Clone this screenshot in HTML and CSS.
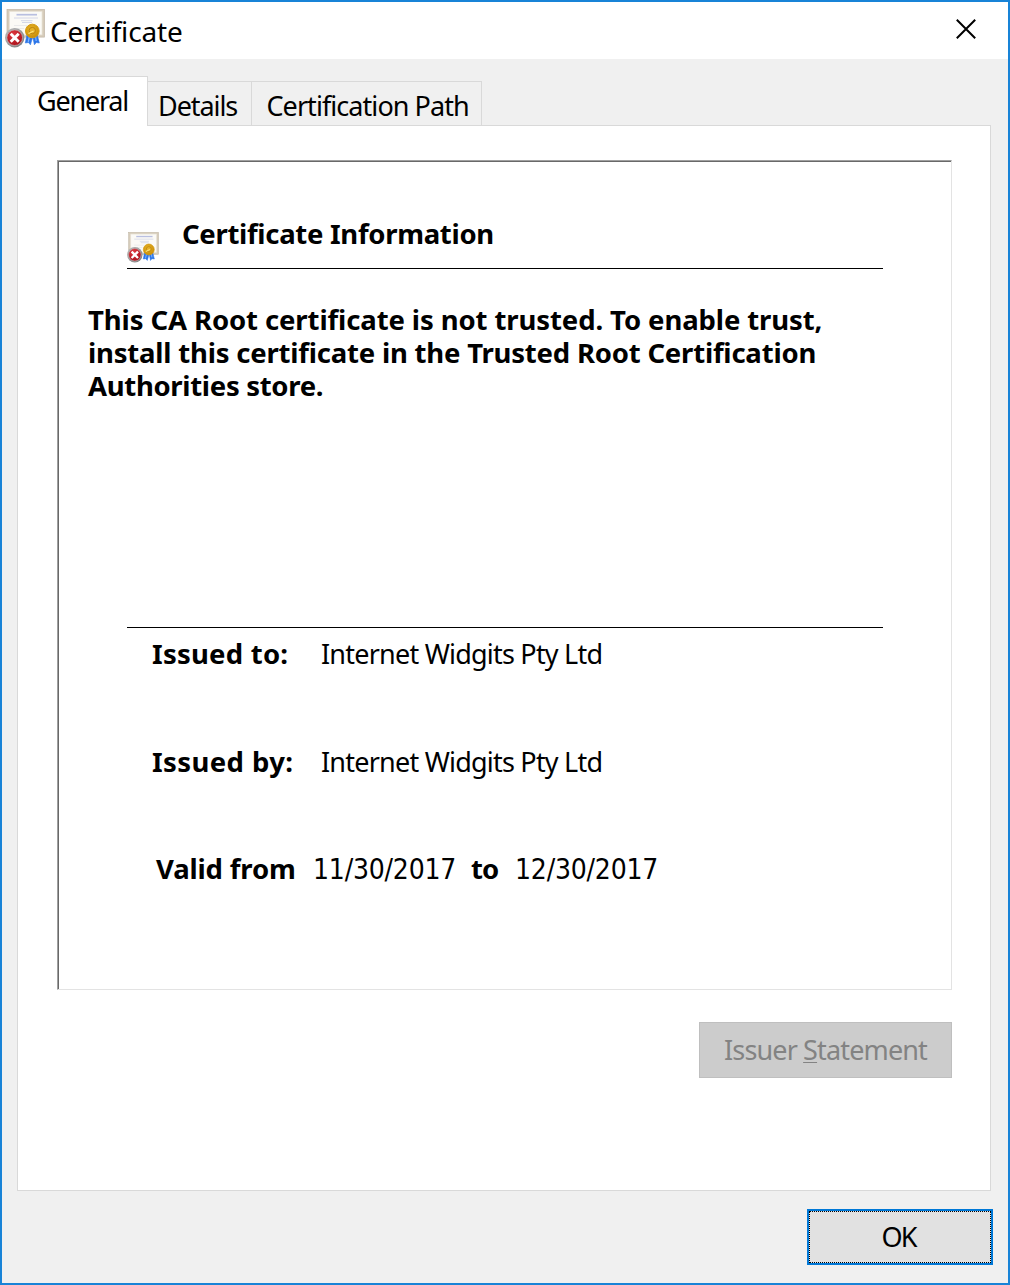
FILE: index.html
```
<!DOCTYPE html>
<html lang="en">
<head>
<meta charset="utf-8">
<title>Certificate</title>
<link rel="stylesheet" href="styles.css">
</head>
<body>
<svg class="defs" aria-hidden="true">
  <defs>
    <radialGradient id="red" cx="40%" cy="30%" r="75%"><stop offset="0" stop-color="#e03a40"/><stop offset="1" stop-color="#a80e18"/></radialGradient>
    <linearGradient id="rim" x1="0" y1="0" x2="1" y2="1"><stop offset="0" stop-color="#bdbdbd"/><stop offset="1" stop-color="#777"/></linearGradient>
    <radialGradient id="gold" cx="45%" cy="40%" r="60%"><stop offset="0" stop-color="#f0bd2c"/><stop offset="1" stop-color="#c78b06"/></radialGradient>
    <symbol id="cert" viewBox="0 0 40 39">
      <rect x="2" y=".5" width="37.5" height="27.6" fill="#d6ccba" stroke="#c0b6a4" stroke-width=".7"/>
      <rect x="4.6" y="2.6" width="32.4" height="23.2" fill="#fbfaf6" stroke="#ebe5da" stroke-width=".8"/>
      <path d="M11.5 5.7H32" stroke="#b9bfe0" stroke-width="1.7"/>
      <path d="M9 9H33M16 11.7H27.5M17 13.5H27" stroke="#cfd3e6" stroke-width=".9"/>
      <path d="M9 16.5H22M8 19.5H19" stroke="#e6e6e8" stroke-width=".8"/>
      <path d="M22 25.5L20.3 34L23.5 33.5L25.4 35.8L28 27ZM27.6 27L29.4 35.8L31.3 33.5L34.3 34L32.2 25.5Z" fill="#2c76e8" stroke="#2c76e8" stroke-width=".6"/>
      <path d="M24.3 28L23.2 33M30.7 28L31.2 32" stroke="#82b6ff" stroke-width="1.2"/>
      <circle cx="27.3" cy="22" r="6.8" fill="url(#gold)" stroke="#d69b12" stroke-width="1"/>
      <circle cx="27.3" cy="21.6" r="3.2" fill="#e6b028" stroke="#b98410" stroke-width="1"/>
      <path d="M23.5 24.5L28.6 22" stroke="#ffe477" stroke-width="1.3"/>
      <circle cx="9.7" cy="28.7" r="9.7" fill="url(#rim)"/>
      <circle cx="9.7" cy="28.7" r="7.8" fill="url(#red)" stroke="#d0c4c4" stroke-width=".6"/>
      <path d="M5.7 24.7L13.7 32.7M13.7 24.7L5.7 32.7" stroke="#fff" stroke-width="2.9"/>
    </symbol>
  </defs>
</svg>
<div class="window">
  <header class="titlebar">
    <svg class="title-icon"><use href="#cert"/></svg>
    <h1 class="title">Certificate</h1>
    <svg class="close" viewBox="0 0 20 20"><path d="M.8.8L19.2 19.2M19.2.8L.8 19.2"/></svg>
  </header>
  <nav class="tabs">
    <span class="tab active">General</span>
    <span class="tab details">Details</span>
    <span class="tab path">Certification Path</span>
  </nav>
  <main class="pane">
    <section class="frame">
      <div class="heading">
        <svg class="cert-icon"><use href="#cert"/></svg>
        <h2 class="heading-text">Certificate Information</h2>
      </div>
      <p class="message"><span class="line first">This CA Root certificate is not trusted. To enable trust,</span><span class="line second">install this certificate in the Trusted Root Certification</span><span class="line third">Authorities store.</span></p>
      <div class="info">
        <div class="row"><b class="label to">Issued to:</b><span class="value">Internet Widgits Pty Ltd</span></div>
        <div class="row"><b class="label by">Issued by:</b><span class="value">Internet Widgits Pty Ltd</span></div>
        <div class="row validity"><b class="from">Valid from</b><span class="date">11/30/2017</span><b class="until">to</b><span class="date">12/30/2017</span></div>
      </div>
    </section>
    <button class="issuer" disabled><span>Issuer <u>S</u>tatement</span></button>
  </main>
  <footer class="footer"><button class="ok"><span class="ok-face">OK</span></button></footer>
</div>
</body>
</html>
```
FILE: styles.css
```
* { box-sizing: border-box; }
body {
  margin: 0;
  font: 27px/34px "Noto Sans", "Open Sans", sans-serif;
  color: #000;
}
h1, h2, p { margin: 0; font-weight: normal; }
button { font: inherit; padding: 0; border-radius: 0; }
.defs { position: absolute; width: 0; height: 0; }

.window {
  width: 1010px;
  height: 1285px;
  border: 2px solid #1883d7;
  background: #f0f0f0;
  display: flex;
  flex-direction: column;
}

.titlebar {
  height: 57px;
  background: #fff;
  display: flex;
  align-items: flex-start;
  padding: 7px 32px 0 3px;
  flex: none;
}
.title-icon { width: 40px; height: 39px; }
.title { font-size: 28px; letter-spacing: -0.15px; margin: 5px auto 0 5px; }
.close { width: 20px; height: 20px; margin-top: 10px; }
.close path { stroke: #000; stroke-width: 2; fill: none; }

.tabs {
  display: flex;
  align-items: flex-end;
  height: 67px;
  margin: 0 15px -1px;
  flex: none;
  position: relative;
}
.tab {
  height: 45px;
  border: 1px solid #d9d9d9;
  border-left: 0;
  white-space: nowrap;
}
.active {
  width: 131px;
  height: 50px;
  background: #fff;
  border-left: 1px solid #d9d9d9;
  border-bottom: 0;
  padding: 7px 0 0 19px;
  letter-spacing: -1.23px;
}
.details { width: 104px; padding: 7px 0 0 10px; letter-spacing: -1.07px; }
.path { width: 230px; padding: 7px 0 0 14.5px; letter-spacing: -0.94px; }

.pane {
  height: 1066px;
  margin: 0 17px 0 15px;
  border: 1px solid #d9d9d9;
  background: #fff;
  padding: 34px 38px 0 39px;
  display: flex;
  flex-direction: column;
  align-items: flex-end;
  flex: none;
}
.frame {
  align-self: stretch;
  height: 830px;
  border: 1px solid;
  border-color: #a0a0a0 #e3e3e3 #e3e3e3 #a0a0a0;
  box-shadow: inset 1px 1px #696969;
}
.heading {
  height: 108px;
  margin: 0 68px 0 69px;
  border-bottom: 1px solid #000;
  display: flex;
  align-items: flex-start;
}
.cert-icon { width: 32px; height: 31px; margin-top: 71px; }
.heading-text {
  margin: 56px 0 0 23px;
  font-weight: bold;
  font-size: 27.5px;
  letter-spacing: -0.3px;
}
.message {
  height: 358px;
  padding: 34px 0 0 30px;
  font-weight: bold;
  font-size: 27.5px;
  line-height: 33px;
}
.line { display: block; white-space: nowrap; }
.first { letter-spacing: -0.1px; }
.second { letter-spacing: -0.2px; }
.third { letter-spacing: -0.31px; }

.info {
  margin: 0 68px 0 69px;
  border-top: 1px solid #000;
  padding: 9px 0 0 25px;
  display: flex;
  flex-direction: column;
  gap: 74px;
}
.row { display: flex; height: 34px; white-space: nowrap; }
.row b { font-size: 27.5px; }
.label { width: 169px; }
.to { letter-spacing: .23px; }
.by { letter-spacing: .4px; }
.value { letter-spacing: -0.78px; }
.validity { padding-left: 4px; margin-top: -1px; }
.from { width: 157px; letter-spacing: -0.15px; }
.until { width: 44px; letter-spacing: -1px; }
.date {
  width: 158px;
  padding-top: 1px;
  font-family: "DejaVu Sans Condensed", "DejaVu Sans", sans-serif;
  font-stretch: condensed;
  font-size: 28px;
  letter-spacing: -0.2px;
}

.issuer {
  width: 253px;
  height: 56px;
  margin-top: 32px;
  border: 1px solid #bfbfbf;
  background: #ccc;
  color: #838383;
  letter-spacing: -0.86px;
}
.issuer u { text-decoration-thickness: 1px; text-underline-offset: 2px; }

.footer { display: flex; justify-content: flex-end; padding: 18px 15px 0 0; }
.ok {
  width: 186px;
  height: 56px;
  border: 2px solid #0078d7;
  background: #e1e1e1;
  color: #000;
  display: flex;
}
.ok-face {
  flex: 1;
  align-self: stretch;
  border: 1px dotted #000;
  padding-right: 3px;
  line-height: 50px;
  letter-spacing: -2px;
}
```
